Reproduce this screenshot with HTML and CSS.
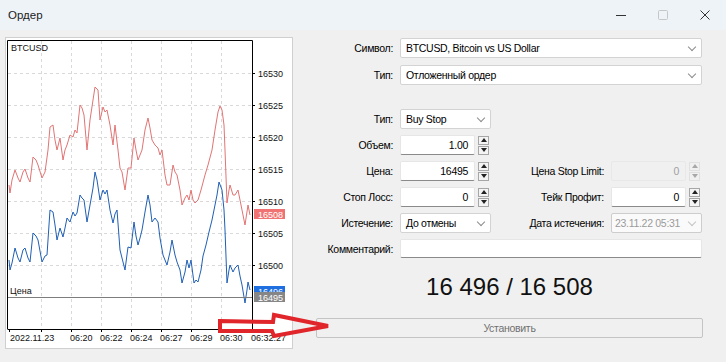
FILE: index.html
```html
<!DOCTYPE html>
<html lang="ru">
<head>
    <meta charset="UTF-8">
    <meta name="viewport" content="width=device-width, initial-scale=1.0">
    <title>Ордер</title>
    <link rel="stylesheet" href="styles.css">
</head>
<body>
    <div class="window">
        <div class="titlebar">
            <span class="title">Ордер</span>
            <div class="caption">
                <span class="cap-btn"><svg width="12" height="12" viewBox="0 0 12 12"><path d="M1 6.5H11" stroke="#333" stroke-width="1"/></svg></span>
                <span class="cap-btn"><svg width="12" height="12" viewBox="0 0 12 12"><rect x="1.5" y="1.5" width="9" height="9" rx="1" fill="none" stroke="#c6c6c6"/></svg></span>
                <span class="cap-btn"><svg width="12" height="12" viewBox="0 0 12 12"><path d="M1.5 1.5L10.5 10.5M10.5 1.5L1.5 10.5" stroke="#333" stroke-width="1"/></svg></span>
            </div>
        </div>

        <div class="main">
            <div class="chart-panel">
                <svg class="chart" width="286" height="310" viewBox="6 38 286 310">
                    <defs>
                        <clipPath id="bid-tag"><rect x="254" y="286" width="31" height="6"/></clipPath>
                    </defs>
                    <g class="grid" stroke="#d9d9d9" stroke-dasharray="3,3">
                        <path d="M8 73.5H252M8 105.5H252M8 137.5H252M8 169.5H252M8 201.5H252M8 233.5H252M8 265.5H252"/>
                        <path d="M41.5 41V329M71.5 41V329M101.5 41V329M131.5 41V329M161.5 41V329M191.5 41V329M221.5 41V329"/>
                    </g>
                    <path d="M7.5 329V40.5H252.5V329.5H7.5" fill="none" stroke="#000"/>
                    <path d="M252 73.5h3M252 105.5h3M252 137.5h3M252 169.5h3M252 201.5h3M252 233.5h3M252 265.5h3" stroke="#000"/>
                    <path d="M9.5 329v3M41.5 329v3M71.5 329v3M101.5 329v3M131.5 329v3M161.5 329v3M191.5 329v3M221.5 329v3M252.5 329v3" stroke="#000"/>

                    <polyline fill="none" stroke="#e27474" stroke-width="1" points="9,185 10,193 12,180 15,170 18,178 20,182 23,172 25,169 28,178 30,182 33,157 36,160 38,165 42,178 45,172 48,150 50,127 53,125 55,140 57,150 60,138 63,160 65,150 67,145 70,135 73,137 75,130 77,133 80,105 82,108 84,115 87,150 90,120 93,100 95,87 98,90 100,120 103,107 105,112 107,110 110,125 113,145 115,125 118,150 120,168 122,172 125,190 128,168 131,168 134,138 136,150 138,160 140,155 142,150 145,130 148,118 150,128 152,140 155,145 158,148 160,155 162,150 165,175 167,185 170,185 173,165 175,172 177,175 180,190 182,205 185,198 187,195 189,200 191,190 193,200 195,203 198,200 201,190 205,175 208,165 212,150 215,130 218,112 220,106 222,110 224,125 225,150 227,203 229,190 230,185 233,195 235,195 238,190 240,200 242,210 245,225 248,205 250,215"/>
                    <polyline fill="none" stroke="#1f5fb4" stroke-width="1" points="9,260 10,270 12,263 15,248 18,258 20,262 23,250 25,248 28,258 30,262 33,233 36,236 38,240 42,262 45,256 47,255 50,210 53,212 55,225 57,240 60,228 63,237 65,228 67,218 70,222 73,212 75,216 77,213 80,195 82,198 84,200 87,222 90,205 93,188 95,172 97,180 100,200 103,190 105,194 107,190 110,210 113,223 115,214 117,210 120,250 125,270 128,247 131,248 134,222 136,236 138,245 140,238 142,230 145,212 148,195 150,205 152,222 155,218 158,222 160,238 163,255 167,265 170,252 172,240 175,255 177,262 180,270 182,283 185,272 187,260 189,268 191,260 194,283 196,280 198,282 201,270 203,256 206,245 209,232 212,220 215,205 217,195 219,182 222,190 224,210 225,230 227,283 229,270 230,265 233,272 235,268 238,265 240,276 242,285 245,303 247,290 248,282 250,290"/>

                    <path d="M8 297.5H252" stroke="#7d7d7d"/>

                    <g class="axis-text">
                        <text x="11" y="51">BTCUSD</text>
                        <text x="10" y="294">Цена</text>
                        <text x="258" y="77">16530</text>
                        <text x="258" y="109">16525</text>
                        <text x="258" y="141">16520</text>
                        <text x="258" y="173">16515</text>
                        <text x="258" y="205">16510</text>
                        <text x="258" y="237">16505</text>
                        <text x="258" y="269">16500</text>
                        <text x="10" y="341">2022.11.23</text>
                        <text x="70" y="341">06:20</text>
                        <text x="100" y="341">06:22</text>
                        <text x="130" y="341">06:24</text>
                        <text x="160" y="341">06:27</text>
                        <text x="190" y="341">06:29</text>
                        <text x="220" y="341">06:30</text>
                        <text x="251" y="341">06:32:27</text>
                    </g>

                    <rect x="254" y="209" width="31" height="10" fill="#f07272"/>
                    <text class="tag" x="258" y="218">16508</text>
                    <rect x="254" y="286" width="31" height="6" fill="#1f6fe0"/>
                    <text class="tag" x="258" y="295" clip-path="url(#bid-tag)">16496</text>
                    <rect x="254" y="292" width="31" height="10" fill="#868686"/>
                    <text class="tag" x="258" y="301">16495</text>
                </svg>
            </div>

            <div class="order-form">
                <div class="form-grid top-rows">
                    <span class="label">Символ:</span>
                    <div class="select span-3">BTCUSD, Bitcoin vs US Dollar<span class="chev"></span></div>
                    <span class="label">Тип:</span>
                    <div class="select span-3">Отложенный ордер<span class="chev"></span></div>
                </div>

                <div class="form-grid params">
                    <span class="label">Тип:</span>
                    <div class="select">Buy Stop<span class="chev"></span></div>
                    <span></span><span></span>

                    <span class="label">Объем:</span>
                    <div class="number"><div class="field">1.00</div><div class="spin"><i class="up"></i><i class="down"></i></div></div>
                    <span></span><span></span>

                    <span class="label">Цена:</span>
                    <div class="number"><div class="field">16495</div><div class="spin"><i class="up"></i><i class="down"></i></div></div>
                    <span class="label">Цена Stop Limit:</span>
                    <div class="number disabled"><div class="field">0</div><div class="spin"><i class="up"></i><i class="down"></i></div></div>

                    <span class="label">Стоп Лосс:</span>
                    <div class="number"><div class="field">0</div><div class="spin"><i class="up"></i><i class="down"></i></div></div>
                    <span class="label">Тейк Профит:</span>
                    <div class="number"><div class="field">0</div><div class="spin"><i class="up"></i><i class="down"></i></div></div>

                    <span class="label">Истечение:</span>
                    <div class="select">До отмены<span class="chev"></span></div>
                    <span class="label">Дата истечения:</span>
                    <div class="select disabled">23.11.22 05:31<span class="chev"></span></div>

                    <span class="label">Комментарий:</span>
                    <div class="field comment span-3"></div>
                </div>

                <div class="bottom">
                    <div class="quote">16 496 / 16 508</div>
                    <div class="submit">Установить</div>
                </div>
            </div>
        </div>

        <svg class="annotation" width="120" height="40" viewBox="214 308 120 40">
            <polygon points="220,321 273,322 274,315 328,326 274,336 272,331 220,331" fill="none" stroke="#e1262b" stroke-width="4" stroke-linejoin="miter"/>
        </svg>
    </div>
</body>
</html>
```

FILE: styles.css
```css
body {
    margin: 0;
    padding: 0;
    background: #f0f0f0;
    font-family: "Liberation Sans", Arial, sans-serif;
    font-size: 10.5px;
    letter-spacing: -0.3px;
    color: #000;
}
.window {
    position: relative;
    width: 726px;
    height: 362px;
    overflow: hidden;
    background: #f0f0f0;
}
.titlebar {
    height: 30px;
    display: flex;
    align-items: center;
    justify-content: space-between;
    background: #eef3f8;
}
.title {
    padding-left: 8px;
    font-size: 11.5px;
    letter-spacing: 0;
    color: #1b1b1b;
}
.caption {
    display: flex;
    height: 30px;
}
.cap-btn {
    width: 42px;
    display: flex;
    align-items: center;
    justify-content: center;
}
.main {
    display: flex;
    padding: 7px 0 0 5px;
}
.chart-panel {
    width: 286px;
    height: 310px;
    border: 1px solid #cfcfcf;
    background: #fff;
}
.chart {
    display: block;
    letter-spacing: 0;
}
.axis-text text {
    font-family: "Liberation Sans", Arial, sans-serif;
    font-size: 9px;
    fill: #111;
}
.chart .tag {
    font-family: "Liberation Sans", Arial, sans-serif;
    font-size: 9px;
    fill: #fff;
}
.order-form {
    margin-left: 7px;
    padding-top: 1px;
    width: 410px;
}
.form-grid {
    display: grid;
    grid-template-columns: 93px 91px 106px 91px;
    column-gap: 7px;
    grid-auto-rows: 20px;
    row-gap: 6px;
}
.top-rows {
    row-gap: 7px;
}
.params {
    margin-top: 24px;
}
.label {
    align-self: center;
    text-align: right;
    white-space: nowrap;
}
.span-3 {
    grid-column: span 3;
}
.select {
    position: relative;
    box-sizing: border-box;
    height: 20px;
    line-height: 18px;
    padding-left: 5px;
    background: #fff;
    border: 1px solid #d3d3d3;
    border-radius: 2px;
    white-space: nowrap;
}
.chev {
    position: absolute;
    right: 6px;
    top: 5px;
    width: 5px;
    height: 5px;
    border-right: 1px solid #8c8c8c;
    border-bottom: 1px solid #8c8c8c;
    transform: rotate(45deg);
}
.select.disabled {
    color: #9a9a9a;
    background: #fafafa;
    border-color: #cdcdcd;
    padding-left: 3px;
}
.select.disabled .chev {
    border-color: #c4c4c4;
}
.number {
    display: flex;
    gap: 3px;
    height: 20px;
}
.field {
    box-sizing: border-box;
    height: 20px;
    line-height: 19px;
    background: #fff;
    border: 1px solid #e6e6e6;
    border-bottom-color: #8a8a8a;
    border-radius: 2px;
}
.number .field {
    width: 75px;
    text-align: right;
    padding-right: 6px;
}
.comment {
    height: 19px;
}
.spin {
    width: 11px;
    display: flex;
    flex-direction: column;
    gap: 1px;
    padding-top: 1px;
}
.spin i {
    position: relative;
    height: 7px;
    border: 1px solid #a6a6a6;
    background: #f4f4f4;
}
.spin i::after {
    content: "";
    position: absolute;
    left: 2px;
    top: 1px;
    border-left: 3px solid transparent;
    border-right: 3px solid transparent;
}
.spin .up::after {
    border-bottom: 4px solid #222;
}
.spin .down::after {
    border-top: 4px solid #222;
}
.number.disabled .field {
    background: #f0f0f0;
    border-color: #e8e8e8;
    color: #a0a0a0;
}
.number.disabled .spin i {
    border-color: #e0e0e0;
    background: #f0f0f0;
}
.number.disabled .spin .up::after {
    border-bottom-color: #a8a8a8;
}
.number.disabled .spin .down::after {
    border-top-color: #a8a8a8;
}
.bottom {
    margin-left: 16px;
    width: 387px;
}
.quote {
    margin-top: 14px;
    height: 28px;
    line-height: 28px;
    font-size: 24px;
    letter-spacing: 0;
    text-align: center;
    color: #111;
}
.submit {
    box-sizing: border-box;
    margin-top: 17px;
    height: 20px;
    line-height: 18px;
    text-align: center;
    color: #707070;
    background: #f0f0f0;
    border: 1px solid #c4c4c4;
    border-radius: 2px;
}
.annotation {
    position: absolute;
    left: 214px;
    top: 308px;
}
```
